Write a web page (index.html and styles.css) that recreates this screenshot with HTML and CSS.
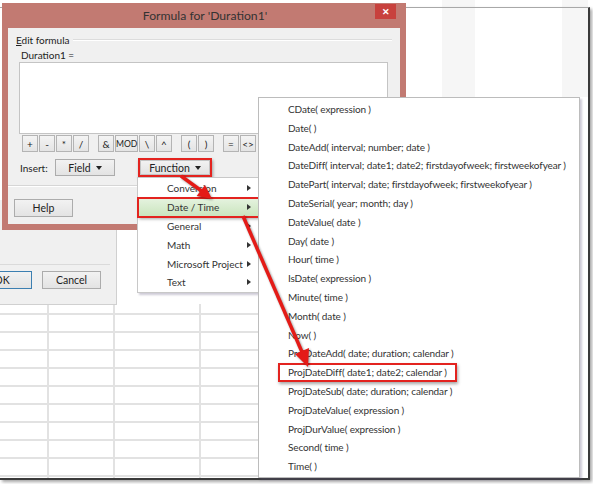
FILE: index.html
```html
<!DOCTYPE html>
<html lang="en">
<head>
    <meta charset="UTF-8">
    <meta name="viewport" content="width=device-width, initial-scale=1.0">
    <title>Formula for 'Duration1'</title>
    <link rel="stylesheet" href="styles.css">
</head>
<body>
<div class="screen">
    <div class="sheet-top"></div>
    <div class="sheet-grid"></div>
    <div class="frame"></div>

    <!-- dialog underneath -->
    <div class="window parent-dlg">
        <div class="parent-foot">
            <button class="btn btn-ok">OK</button>
            <button class="btn btn-cancel">Cancel</button>
        </div>
    </div>

    <div class="window formula-dlg">
        <div class="titlebar">
            <span class="title">Formula for 'Duration1'</span>
            <span class="close">&#x2715;</span>
        </div>
        <div class="dlg-body">
            <div class="group-head"><span><u>E</u>dit formula</span></div>
            <div class="field-name">Duration1 =</div>
            <div class="formula-box"></div>
            <div class="ops">
                <div class="op-group">
                    <button class="op">+</button>
                    <button class="op">-</button>
                    <button class="op">*</button>
                    <button class="op">/</button>
                </div>
                <div class="op-group">
                    <button class="op">&amp;</button>
                    <button class="op op-wide">MOD</button>
                    <button class="op">\</button>
                    <button class="op">^</button>
                </div>
                <div class="op-group">
                    <button class="op">(</button>
                    <button class="op">)</button>
                </div>
                <div class="op-group">
                    <button class="op">=</button>
                    <button class="op">&lt;&gt;</button>
                </div>
            </div>
            <div class="insert-row">
                <span class="insert-label">Insert:</span>
                <button class="btn btn-field">Field <span class="caret"></span></button>
                <div class="callout-box">
                    <button class="btn btn-func">Function <span class="caret"></span></button>
                </div>
            </div>
            <div class="sep"></div>
            <button class="btn btn-help">Help</button>
        </div>
    </div>

    <ul class="menu cat-menu">
        <li>Conversion <span class="sub"></span></li>
        <li class="hl">Date / Time <span class="sub"></span></li>
        <li>General <span class="sub"></span></li>
        <li>Math <span class="sub"></span></li>
        <li>Microsoft Project <span class="sub"></span></li>
        <li>Text <span class="sub"></span></li>
    </ul>

    <ul class="menu fn-menu">
        <li>CDate( expression )</li>
        <li>Date( )</li>
        <li>DateAdd( interval; number; date )</li>
        <li>DateDiff( interval; date1; date2; firstdayofweek; firstweekofyear )</li>
        <li>DatePart( interval; date; firstdayofweek; firstweekofyear )</li>
        <li>DateSerial( year; month; day )</li>
        <li>DateValue( date )</li>
        <li>Day( date )</li>
        <li>Hour( time )</li>
        <li>IsDate( expression )</li>
        <li>Minute( time )</li>
        <li>Month( date )</li>
        <li>Now( )</li>
        <li>ProjDateAdd( date; duration; calendar )</li>
        <li><span class="callout">ProjDateDiff( date1; date2; calendar )</span></li>
        <li>ProjDateSub( date; duration; calendar )</li>
        <li>ProjDateValue( expression )</li>
        <li>ProjDurValue( expression )</li>
        <li>Second( time )</li>
        <li>Time( )</li>
    </ul>

    <svg class="arrows" width="593" height="484" viewBox="0 0 593 484">
        <line x1="181" y1="176" x2="203" y2="192" />
        <polygon points="212,199 196.6,196.1 205,184.9" />
        <line x1="243" y1="216" x2="302" y2="352" />
        <polygon points="308,367 295,354 309,348" />
    </svg>
</div>
</body>
</html>
```

FILE: styles.css
```css
body {
    margin: 0;
    background: #fff;
    font-family: Lato, "Open Sans", sans-serif;
    color: #333;
}
.screen {
    position: relative;
    width: 593px;
    height: 484px;
    overflow: hidden;
    background: #fff;
}
.sheet-top {
    position: absolute;
    left: 406px;
    top: 0;
    width: 182px;
    height: 97px;
    background: linear-gradient(90deg, transparent 36px, #f6f6f6 36px 69px, transparent 69px 156px, #f6f6f6 156px);
}
.sheet-grid {
    position: absolute;
    left: 0;
    top: 304px;
    width: 258px;
    height: 174px;
    background-image:
        linear-gradient(90deg, transparent 47px, #e2e2e2 47px 49px, transparent 49px 113px, #e2e2e2 113px 115px, transparent 115px 199px, #e2e2e2 199px 201px, transparent 201px),
        repeating-linear-gradient(180deg, transparent 0 9px, #e2e2e2 9px 11px, transparent 11px 18px);
}
.frame {
    position: absolute;
    left: 0;
    top: 7px;
    width: 590px;
    height: 473px;
    box-sizing: border-box;
    border-top: 1px solid #a8a8a8;
    border-right: 2px solid #3a3a3a;
    border-bottom: 2px solid #3a3a3a;
    box-shadow: 2px 2px 3px rgba(0, 0, 0, .35);
}
.window {
    position: absolute;
    box-sizing: border-box;
}
button {
    font-family: inherit;
}
.btn {
    display: inline-flex;
    align-items: center;
    justify-content: center;
    gap: 5px;
    height: 18px;
    padding: 0;
    border: 1px solid #acacac;
    background: linear-gradient(#f2f2f2, #e3e3e3);
    font-size: 10.5px;
    color: #222;
}
.caret {
    width: 0;
    height: 0;
    border-left: 3.5px solid transparent;
    border-right: 3.5px solid transparent;
    border-top: 4px solid #222;
}

/* parent dialog */
.parent-dlg {
    left: -60px;
    top: 200px;
    width: 177px;
    height: 105px;
    background: #f0f0f0;
    border-right: 1px solid #d0d0d0;
    border-bottom: 1px solid #d0d0d0;
    display: flex;
    flex-direction: column;
    justify-content: flex-end;
}
.parent-foot {
    display: flex;
    justify-content: flex-end;
    gap: 10px;
    margin-right: 6px;
    padding: 6px 9px 15px 0;
    border-top: 1px solid #dadada;
}
.btn-ok {
    width: 60px;
    border-color: #3c7fb1;
}
.btn-cancel {
    width: 59px;
}

/* formula dialog */
.formula-dlg {
    left: 2px;
    top: 3px;
    width: 404px;
    height: 227px;
    background: #c27a72;
    padding: 0 6px 6px;
    display: flex;
    flex-direction: column;
}
.titlebar {
    position: relative;
    height: 25px;
    display: flex;
    align-items: center;
    justify-content: center;
}
.title {
    font-size: 12.2px;
    color: #333;
    margin-left: 2px;
}
.close {
    position: absolute;
    right: 4px;
    top: 1px;
    width: 21px;
    height: 15px;
    background: #c8413d;
    color: #fff;
    font-size: 9px;
    font-weight: bold;
    display: flex;
    align-items: center;
    justify-content: center;
}
.dlg-body {
    flex: 1;
    background: #f0f0f0;
    font-size: 10px;
    color: #222;
}
.group-head {
    display: flex;
    align-items: center;
    margin: 5px 8px 0 8px;
    line-height: 14px;
}
.group-head::after {
    content: "";
    flex: 1;
    margin-left: 3px;
    border-top: 1px solid #dcdcdc;
    border-bottom: 1px solid #fff;
}
.field-name {
    padding-left: 13px;
    line-height: 13px;
    margin-top: 2px;
}
.formula-box {
    height: 72px;
    margin: 0 12px 0 11px;
    background: #fff;
    border: 1px solid #c4c4c4;
    box-sizing: border-box;
}
.ops {
    display: flex;
    gap: 9px;
    margin-top: 1px;
    padding-left: 14px;
}
.op-group {
    display: flex;
    gap: 1px;
}
.op {
    width: 16px;
    height: 17px;
    padding: 0;
    border: 1px solid #b4b4b4;
    background: linear-gradient(#f4f4f4, #e4e4e4);
    font-size: 10px;
    color: #222;
}
.op-wide {
    width: 23px;
    font-size: 8.6px;
}
.insert-row {
    display: flex;
    align-items: center;
    height: 19px;
    margin-top: 6px;
    padding-left: 12px;
}
.insert-label {
    width: 35px;
}
.btn-field {
    width: 60px;
    height: 17px;
}
.callout-box {
    margin-left: 23px;
    width: 74px;
    height: 19px;
    box-sizing: border-box;
    border: 2px solid #e3231f;
    box-shadow: 1px 2px 3px rgba(0, 0, 0, .35);
    display: flex;
}
.btn-func {
    flex: 1;
    height: 15px;
    border-color: #c4c4c4;
}
.sep {
    margin-top: 8px;
    border-top: 1px solid #d6d6d6;
    border-bottom: 1px solid #fff;
}
.btn-help {
    width: 59px;
    margin: 12px 0 0 6px;
}

/* popup menus */
.menu {
    position: absolute;
    margin: 0;
    list-style: none;
    box-sizing: border-box;
    background: #fff;
    border: 1px solid #c8c8c8;
    box-shadow: 2px 2px 2px rgba(90, 80, 120, .3);
    font-size: 10px;
    color: #333;
    white-space: nowrap;
}
.menu li {
    height: 18.8px;
    display: flex;
    align-items: center;
}
.cat-menu {
    left: 137px;
    top: 177px;
    width: 123px;
    height: 116px;
    padding: 1px 0 0 0;
}
.cat-menu li {
    padding-left: 29px;
    padding-right: 8px;
    justify-content: space-between;
}
.sub {
    width: 0;
    height: 0;
    border-top: 3.5px solid transparent;
    border-bottom: 3.5px solid transparent;
    border-left: 4px solid #333;
}
.cat-menu li.hl {
    background: linear-gradient(#e6f3e0, #c8e4bc);
    outline: 2px solid #e3231f;
    outline-offset: -1px;
    box-shadow: 1px 2px 3px rgba(0, 0, 0, .35);
}
.fn-menu {
    left: 258px;
    top: 97px;
    width: 322px;
    height: 381px;
    padding: 1.6px 0 0 29px;
    border-color: #bcbcbc;
    letter-spacing: -0.12px;
}
.callout {
    display: flex;
    align-items: center;
    height: 19px;
    box-sizing: border-box;
    margin-left: -10px;
    padding: 0 8px;
    border: 2px solid #e3231f;
    box-shadow: 1px 2px 3px rgba(0, 0, 0, .35);
}

.arrows {
    position: absolute;
    left: 0;
    top: 0;
    pointer-events: none;
    filter: drop-shadow(1px 1px 1px rgba(0, 0, 0, .4));
}
.arrows line {
    stroke: #e41b17;
    stroke-width: 3.5;
}
.arrows polygon {
    fill: #e41b17;
}
```
